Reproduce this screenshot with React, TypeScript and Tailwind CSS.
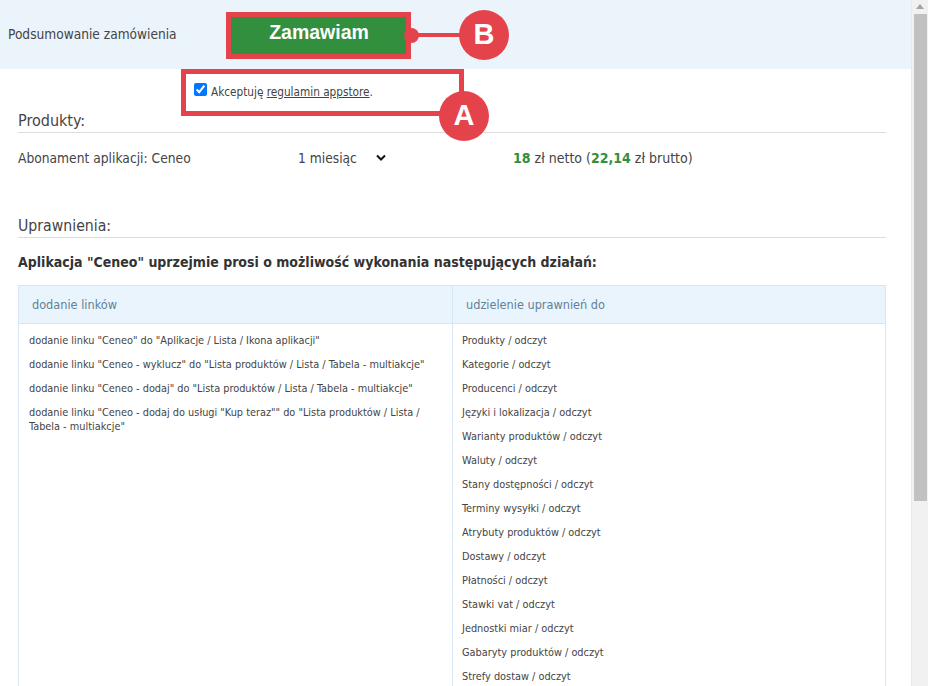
import React from 'react';

const links = [
    'dodanie linku "Ceneo" do "Aplikacje / Lista / Ikona aplikacji"',
    'dodanie linku "Ceneo - wyklucz" do "Lista produktów / Lista / Tabela - multiakcje"',
    'dodanie linku "Ceneo - dodaj" do "Lista produktów / Lista / Tabela - multiakcje"',
    'dodanie linku "Ceneo - dodaj do usługi "Kup teraz"" do "Lista produktów / Lista / Tabela - multiakcje"',
];

const permissions = [
    'Produkty', 'Kategorie', 'Producenci', 'Języki i lokalizacja', 'Warianty produktów', 'Waluty',
    'Stany dostępności', 'Terminy wysyłki', 'Atrybuty produktów', 'Dostawy', 'Płatności',
    'Stawki vat', 'Jednostki miar', 'Gabaryty produktów', 'Strefy dostaw',
];

const Badge: React.FC<{ letter: string; className: string }> = ({ letter, className }) => (
    <div className={`absolute w-[50px] h-[50px] rounded-full bg-[#e4434c] text-white flex items-center justify-center text-[29px] font-bold font-['Liberation_Sans',sans-serif] ${className}`}>
        {letter}
    </div>
);

export default function App() {
    return (
        <div className="relative h-[686px] w-[928px] overflow-hidden flex bg-white text-[#444] font-['DejaVu_Sans_Condensed','DejaVu_Sans',sans-serif]">
            <main className="w-[911px] shrink-0">
                <header className="h-[69px] bg-[#ebf3fb] flex items-center pl-2">
                    <span className="w-[218px] text-[13.6px]">Podsumowanie zamówienia</span>
                    <button className="w-[185px] h-[47px] mt-[2px] border-[5px] border-[#e4434c] bg-[#328f3e] text-white text-[19.5px] font-bold font-['Liberation_Sans',sans-serif] pb-[6px] pl-[1px]">
                        Zamawiam
                    </button>
                </header>

                <div className="pl-[194px] pt-[14px] h-[40px] flex items-start gap-1">
                    <input type="checkbox" defaultChecked className="w-[13px] h-[13px] accent-[#0075ff] m-0" />
                    <span className="text-[11.7px] leading-[15px] mt-[2px]">
                        Akceptuję <span className="underline">regulamin appstore</span>.
                    </span>
                </div>

                <section className="pl-[18px] pr-[25px]">
                    <h2 className="text-[16px] leading-[23px] border-b border-[#dddddd] h-[24px]">Produkty:</h2>
                    <div className="flex items-center h-[50px] text-[13.7px]">
                        <span className="w-[280px]">Abonament aplikacji: Ceneo</span>
                        <span className="w-[215px] flex items-center">
                            1 miesiąc
                            <svg width="10" height="7" viewBox="0 0 10 7" className="ml-[19px]">
                                <path d="M1 1.5 L5 5.5 L9 1.5" fill="none" stroke="#111" strokeWidth="2" />
                            </svg>
                        </span>
                        <span className="text-[14px]">
                            <b className="text-[#328f3e]">18</b> zł netto (<b className="text-[#328f3e]">22,14</b> zł brutto)
                        </span>
                    </div>

                    <h2 className="mt-[31px] text-[15.7px] leading-[23px] border-b border-[#dddddd] h-[24px]">Uprawnienia:</h2>
                    <p className="mt-[14px] text-[14px] leading-[20px] font-bold text-[#333]">
                        Aplikacja "Ceneo" uprzejmie prosi o możliwość wykonania następujących działań:
                    </p>

                    <div className="mt-[13px] border border-[#d6e6f5] grid grid-cols-[434px_1fr] grid-rows-[38px_1fr] h-[500px]">
                        <div className="bg-[#e9f4fd] border-b border-r border-[#d6e6f5] flex items-center px-[13px] pt-[1px] text-[12.6px] text-[#5f8299]">dodanie linków</div>
                        <div className="bg-[#e9f4fd] border-b border-[#d6e6f5] flex items-center px-[13px] pt-[1px] text-[12.6px] text-[#5f8299]">udzielenie uprawnień do</div>
                        <div className="border-r border-[#d6e6f5] pl-[10px] pr-[14px] pt-[10px] text-[10.85px] leading-[14px] space-y-[10px]">
                            {links.map((link) => (
                                <p key={link}>{link}</p>
                            ))}
                        </div>
                        <div className="pl-[9px] pt-[10px] text-[10.85px] leading-[14px] space-y-[10px]">
                            {permissions.map((name) => (
                                <p key={name}>{name} / odczyt</p>
                            ))}
                        </div>
                    </div>
                </section>
            </main>

            <div className="w-[17px] shrink-0 bg-[#f1f1f1] border-l border-[#e8e8e8] flex flex-col items-center">
                <svg width="8" height="5" viewBox="0 0 8 5" className="mt-[4px] mb-[5px]">
                    <path d="M4 0 L8 5 L0 5 Z" fill="#a3a3a3" />
                </svg>
                <div className="w-[13px] h-[487px] bg-[#c1c1c1]" />
            </div>

            {/* annotation frames */}
            <div className="absolute left-[181px] top-[69px] w-[283px] h-[47px] border-[5px] border-[#e4434c]" />
            <Badge letter="A" className="left-[439px] top-[91px]" />
            <div className="absolute left-[405px] top-[33px] w-[60px] h-[4px] bg-[#e4434c]" />
            <div className="absolute left-[404px] top-[28px] w-[15px] h-[15px] rounded-full bg-[#e4434c]" />
            <Badge letter="B" className="left-[459px] top-[10px]" />
        </div>
    );
}
